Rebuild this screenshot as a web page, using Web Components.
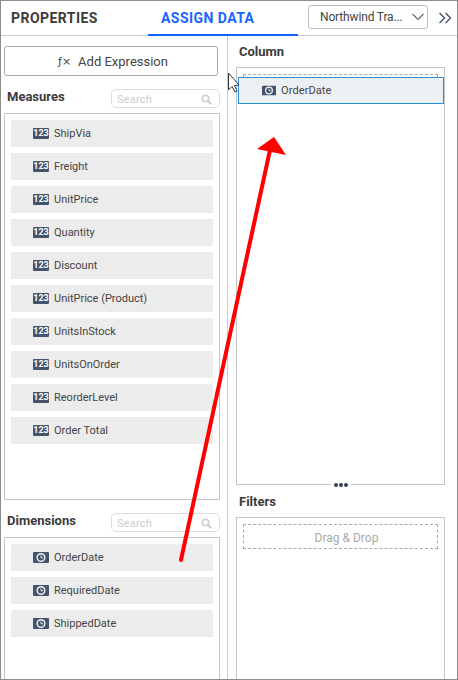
<!DOCTYPE html>
<html>
<head>
<meta charset="utf-8">
<style>
html,body{margin:0;padding:0;background:#fff;}
body{width:458px;height:680px;overflow:hidden;font-family:Roboto,"Liberation Sans",sans-serif;}
</style>
</head>
<body>
<data-panel>
	<panel-header slot="header"></panel-header>
	<div slot="left" style="display:contents">
		<add-button></add-button>
		<field-section title="Measures" height="387">
			<field-item kind="num">ShipVia</field-item>
			<field-item kind="num">Freight</field-item>
			<field-item kind="num">UnitPrice</field-item>
			<field-item kind="num">Quantity</field-item>
			<field-item kind="num">Discount</field-item>
			<field-item kind="num">UnitPrice (Product)</field-item>
			<field-item kind="num">UnitsInStock</field-item>
			<field-item kind="num">UnitsOnOrder</field-item>
			<field-item kind="num">ReorderLevel</field-item>
			<field-item kind="num">Order Total</field-item>
		</field-section>
		<field-section title="Dimensions" height="143">
			<field-item kind="date">OrderDate</field-item>
			<field-item kind="date">RequiredDate</field-item>
			<field-item kind="date">ShippedDate</field-item>
		</field-section>
	</div>
	<div slot="right" style="display:contents">
		<drop-section title="Column" height="418" class="column"><drop-zone></drop-zone></drop-section>
		<drop-section title="Filters" height="163" class="filters"><drop-zone>Drag &amp; Drop</drop-zone></drop-section>
	</div>
</data-panel>
<drag-overlay></drag-overlay>

<script>
const dateIcon = `<svg width="16" height="11" viewBox="0 0 16 11"><rect width="16" height="11" rx="1" fill="#44546c"/><circle cx="8" cy="5.500" r="4.500" fill="#f4f4f4"/><circle cx="8" cy="5.500" r="3.100" fill="#44546c"/><path d="M8 3.500V5.800H10" fill="none" stroke="#fff" stroke-width=".9"/></svg>`;

class DataPanel extends HTMLElement {
	constructor(){
		super();
		this.attachShadow({mode:"open"});
		this.shadowRoot.innerHTML = `
			<style>
				:host {
					display: flex;
					flex-direction: column;
					box-sizing: border-box;
					width: 458px;
					height: 680px;
					border: 1px solid #8c8c8c;
					overflow: hidden;
					color: #333;
				}
				.body {
					flex: 1;
					display: flex;
					min-height: 0;
				}
				.left {
					box-sizing: border-box;
					width: 227px;
					padding: 10px 0 0 3px;
					border-right: 1px solid #ccc;
				}
				.right {
					flex: 1;
					padding: 0 0 0 8px;
				}
			</style>
			<slot name="header"></slot>
			<div class="body">
				<div class="left"><slot name="left"></slot></div>
				<div class="right"><slot name="right"></slot></div>
			</div>
		`;
	}
}
customElements.define("data-panel",DataPanel);

class PanelHeader extends HTMLElement {
	constructor(){
		super();
		this.attachShadow({mode:"open"});
		this.shadowRoot.innerHTML = `
			<style>
				:host {
					display: flex;
					align-items: center;
					box-sizing: border-box;
					height: 35px;
					border-bottom: 1px solid #ccc;
					position: relative;
				}
				.tab {
					font-size: 14px;
					font-weight: 700;
					letter-spacing: .45px;
					line-height: 34px;
				}
				.props {
					width: 147px;
					padding-left: 10px;
					box-sizing: border-box;
					color: #3b3b3b;
				}
				.assign {
					box-sizing: border-box;
					width: 150px;
					height: 35px;
					margin-bottom: -1px;
					padding-left: 13px;
					color: #1a66ff;
					border-bottom: 2px solid #0f62fe;
				}
				.select {
					box-sizing: border-box;
					display: flex;
					align-items: center;
					justify-content: space-between;
					width: 120px;
					height: 24px;
					margin: 0 0 2px 10px;
					padding: 0 2px 0 11px;
					border: 1px solid #bdbdbd;
					border-radius: 3px;
					font-size: 12px;
					letter-spacing: -.15px;
					white-space: nowrap;
					color: #444;
				}
				.more {
					margin-left: 10px;
					display: block;
				}
			</style>
			<div class="tab props">PROPERTIES</div>
			<div class="tab assign">ASSIGN DATA</div>
			<div class="select"><span>Northwind Tra...</span>
				<svg width="14" height="8" viewBox="0 0 14 8"><path d="M1.500 1l5.500 5.500L12.500 1" fill="none" stroke="#666" stroke-width="1.100"/></svg>
			</div>
			<svg class="more" width="14" height="12" viewBox="0 0 14 12"><path d="M1.500 1l5 5-5 5M7.500 1l5 5-5 5" fill="none" stroke="#44546c" stroke-width="1.400"/></svg>
		`;
	}
}
customElements.define("panel-header",PanelHeader);

class AddButton extends HTMLElement {
	constructor(){
		super();
		this.attachShadow({mode:"open"});
		this.shadowRoot.innerHTML = `
			<style>
				:host {
					display: flex;
					align-items: center;
					justify-content: center;
					gap: 7px;
					box-sizing: border-box;
					width: 214px;
					height: 30px;
					padding-left: 4px;
					border: 1px solid #aaa;
					border-radius: 3px;
					font-size: 13px;
					color: #444;
				}
				i {
					font: 11px "DejaVu Sans",sans-serif;
				}
			</style>
			<i>ƒ×</i><span>Add Expression</span>
		`;
	}
}
customElements.define("add-button",AddButton);

class SearchBox extends HTMLElement {
	constructor(){
		super();
		this.attachShadow({mode:"open"});
		this.shadowRoot.innerHTML = `
			<style>
				:host {
					display: flex;
					align-items: center;
					justify-content: space-between;
					box-sizing: border-box;
					width: 109px;
					height: 19px;
					padding: 1px 7px 0 5px;
					border: 1px solid #ddd;
					border-radius: 5px;
					font-size: 11px;
					letter-spacing: .2px;
					color: #ccc;
				}
				svg { display: block; }
			</style>
			<span>Search</span>
			<svg width="11" height="11" viewBox="0 0 11 11"><circle cx="4.500" cy="4.500" r="3.200" fill="none" stroke="#ccc" stroke-width="1.500"/><path d="M7 7l3.200 3.200" stroke="#ccc" stroke-width="2"/></svg>
		`;
	}
}
customElements.define("search-box",SearchBox);

class FieldSection extends HTMLElement {
	constructor(){
		super();
		this.attachShadow({mode:"open"});
		this.shadowRoot.innerHTML = `
			<style>
				:host {
					display: block;
					width: 216px;
				}
				.head {
					display: flex;
					align-items: center;
					justify-content: space-between;
					height: 19px;
					padding: 13px 0 5px 3px;
				}
				.title {
					padding-bottom: 4px;
					font-size: 13px;
					font-weight: 700;
					color: #3b3b3b;
				}
				.list {
					box-sizing: border-box;
					display: flex;
					flex-direction: column;
					gap: 6px;
					padding: 6px;
					border: 1px solid #c4c4c4;
				}
			</style>
			<div class="head"><span class="title"></span><search-box></search-box></div>
			<div class="list"><slot></slot></div>
		`;
		this.shadowRoot.querySelector(".title").textContent = this.getAttribute("title");
		this.shadowRoot.querySelector(".list").style.height = this.getAttribute("height")+"px";
	}
}
customElements.define("field-section",FieldSection);

class FieldItem extends HTMLElement {
	constructor(){
		super();
		this.attachShadow({mode:"open"});
		this.shadowRoot.innerHTML = `
			<style>
				:host {
					display: flex;
					align-items: center;
					gap: 5px;
					box-sizing: border-box;
					flex: none;
					height: 27px;
					padding-left: 22px;
					background: #ececec;
					border-radius: 1px;
					font-size: 11px;
					color: #444;
				}
				.num {
					box-sizing: border-box;
					width: 16px;
					height: 11px;
					background: #44546c;
					border-radius: 1px;
					color: #fff;
					font: 700 9px/11px Roboto,sans-serif;
					text-align: center;
				}
				svg { display: block; flex: none; }
			</style>
			<span class="icon"></span><slot></slot>
		`;
		const icon = this.shadowRoot.querySelector(".icon");
		if (this.getAttribute("kind")=="num"){
			icon.className = "num";
			icon.textContent = "123";
		}else{
			icon.innerHTML = dateIcon;
		}
	}
}
customElements.define("field-item",FieldItem);

class DropZone extends HTMLElement {
	constructor(){
		super();
		this.attachShadow({mode:"open"});
		this.shadowRoot.innerHTML = `
			<style>
				:host {
					display: flex;
					align-items: center;
					justify-content: center;
					box-sizing: border-box;
					height: 25px;
					padding: 2px 0 0 12px;
					border: 1px dashed #aaa;
					font-size: 12px;
					color: #aaa;
				}
			</style>
			<slot></slot>
		`;
	}
}
customElements.define("drop-zone",DropZone);

class DropSection extends HTMLElement {
	constructor(){
		super();
		this.attachShadow({mode:"open"});
		this.shadowRoot.innerHTML = `
			<style>
				:host {
					display: block;
					width: 209px;
				}
				.title {
					height: 31px;
					line-height: 32px;
					padding-left: 3px;
					font-size: 13px;
					font-weight: 700;
					color: #3b3b3b;
				}
				:host(.filters) .title {
					height: 32px;
					line-height: 33px;
				}
				.box {
					box-sizing: border-box;
					padding: 6px;
					border: 1px solid #c4c4c4;
					position: relative;
				}
				.dots {
					display: none;
					position: absolute;
					left: 94px;
					bottom: -3px;
					padding: 0 3px;
					gap: 1px;
					background: #fff;
				}
				:host(.column) .dots { display: flex; }
				.dots b {
					width: 4px;
					height: 4px;
					border-radius: 50%;
					background: #333f50;
				}
			</style>
			<div class="title"></div>
			<div class="box"><slot></slot><div class="dots"><b></b><b></b><b></b></div></div>
		`;
		this.shadowRoot.querySelector(".title").textContent = this.getAttribute("title");
		this.shadowRoot.querySelector(".box").style.height = this.getAttribute("height")+"px";
	}
}
customElements.define("drop-section",DropSection);

// dragged chip, cursor and the red annotation arrow sit over the panel
class DragOverlay extends HTMLElement {
	constructor(){
		super();
		this.attachShadow({mode:"open"});
		this.shadowRoot.innerHTML = `
			<style>
				:host {
					display: block;
					position: absolute;
					left: 0;
					top: 0;
					width: 458px;
					height: 680px;
					pointer-events: none;
				}
				.chip {
					position: absolute;
					left: 238px;
					top: 77px;
					width: 206px;
					height: 27px;
					box-sizing: border-box;
					display: flex;
					align-items: center;
					gap: 5px;
					padding: 0 0 1px 23px;
					background: #edf0f3;
					border: 1px solid #2a8fd8;
					font-size: 11px;
					letter-spacing: .1px;
					color: #444;
				}
				.chip svg { display: block; width: 14px; }
				.art { position: absolute; left: 0; top: 0; }
			</style>
			<div class="chip">${dateIcon}<span>OrderDate</span></div>
			<svg class="art" width="458" height="680" viewBox="0 0 458 680">
				<path d="M181 560L270 150" stroke="#f00" stroke-width="4" stroke-linecap="round" fill="none"/>
				<path d="M274 137L286 155L257 149Z" fill="#f00"/>
				<path d="M228.500 73V90L232 86.500L235 92L237 91L234.500 85.500L239 85Z" fill="#fff" stroke="#333" stroke-width="1"/>
			</svg>
		`;
	}
}
customElements.define("drag-overlay",DragOverlay);
</script>
</body>
</html>
